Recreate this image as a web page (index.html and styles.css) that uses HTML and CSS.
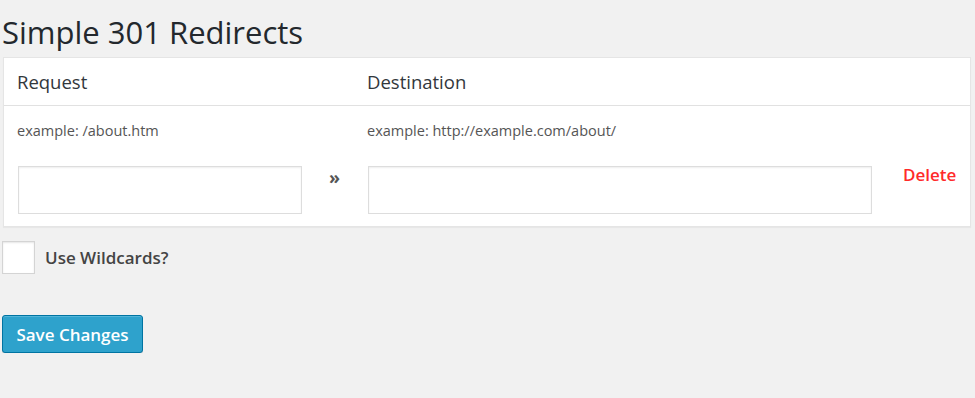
FILE: index.html
```html
<!DOCTYPE html>
<html lang="en">
<head>
  <meta charset="UTF-8">
  <title>Simple 301 Redirects</title>
  <link rel="stylesheet" href="styles.css">
</head>
<body>
  <div class="wrap">
    <h1>Simple 301 Redirects</h1>

    <!-- Redirects table -->
    <div class="redirects">
      <div class="row head">
        <div>Request</div>
        <div></div>
        <div>Destination</div>
        <div></div>
      </div>
      <div class="row body">
        <div class="hint">example: /about.htm</div>
        <div></div>
        <div class="hint">example: http://example.com/about/</div>
        <div></div>
        <input class="field" type="text">
        <div class="arrow">&raquo;</div>
        <input class="field" type="text">
        <a class="delete" href="#">Delete</a>
      </div>
    </div>

    <label class="wildcards">
      <input type="checkbox" class="check">
      <span>Use Wildcards?</span>
    </label>

    <button class="save">Save Changes</button>
  </div>
</body>
</html>
```

FILE: styles.css
```css
/* WordPress-ish admin page */
body {
  margin: 0;
  background-color: #f1f1f1;
  font-family: 'Open Sans', sans-serif;
  color: #444;
}

.wrap {
  padding: 0 2px;
}

h1 {
  margin: 0;
  padding: 14px 0 0;
  font-size: 31px;
  font-weight: 400;
  line-height: 36px;
  color: #23282d;
}

.redirects {
  margin-top: 7px;
  margin-left: 1px;
  width: 966px;
  background-color: #fff;
  border: 1px solid #e5e5e5;
  box-shadow: 0 1px 1px rgba(0,0,0,0.04);
}

.row {
  display: grid;
  grid-template-columns: 285px 65px 505px 1fr;
  padding-left: 13px;
}

.head {
  height: 47px;
  align-items: center;
  font-size: 18.5px;
  color: #32373c;
  border-bottom: 1px solid #e1e1e1;
}

.body {
  padding-top: 15px;
  padding-bottom: 12px;
  row-gap: 25px;
}

.hint {
  font-size: 14.5px;
  line-height: 20px;
  color: #555;
}

.field {
  box-sizing: border-box;
  height: 48px;
  margin: 0 0 0 1px;
  border: 1px solid #ddd;
  box-shadow: inset 0 1px 2px rgba(0,0,0,0.07);
  background: #fff;
  font-family: inherit;
}

.arrow {
  align-self: start;
  margin-top: 2px;
  text-align: center;
  font-size: 18px;
  line-height: 18px;
  font-weight: 700;
  color: #555;
}

.delete {
  align-self: start;
  margin-top: -3px;
  padding-left: 31px;
  font-size: 17px;
  font-weight: 600;
  color: #ff2a2a;
  text-decoration: none;
}

.wildcards {
  display: flex;
  align-items: center;
  gap: 10px;
  margin-top: 14px;
  font-size: 17px;
  font-weight: 600;
  color: #444;
}

.check {
  appearance: none;
  width: 33px;
  height: 33px;
  margin: 0;
  background: #fff;
  border: 1px solid #d4d4d4;
  box-shadow: inset 0 1px 2px rgba(0,0,0,0.1);
}

.save {
  display: block;
  margin-top: 41px;
  width: 141px;
  height: 38px;
  padding: 0;
  background-color: #2ea2cc;
  border: 1px solid #0074a2;
  border-radius: 3px;
  box-shadow: inset 0 1px 0 rgba(120,200,230,0.5), 0 1px 0 rgba(0,0,0,0.15);
  color: #fff;
  font-family: inherit;
  font-size: 17px;
  font-weight: 600;
  cursor: pointer;
}
```
